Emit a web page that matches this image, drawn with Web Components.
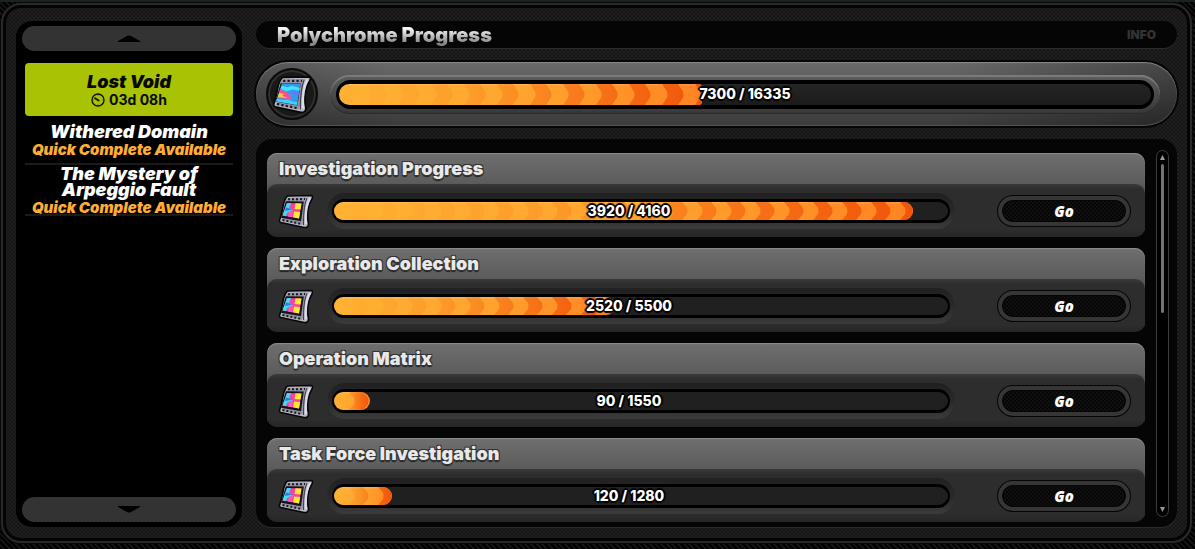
<!DOCTYPE html>
<html lang="en">
<head>
<meta charset="utf-8">
<title>Polychrome Progress</title>
<style>
*{box-sizing:border-box}
html{height:100%}
body{margin:0;min-height:100vh;padding:3px 3px 6px 1px;display:flex;
  background:linear-gradient(#1a2225 0 2px,transparent 2px),repeating-linear-gradient(45deg,#000 0 2px,#141414 2px 4px);
  font-family:Inter,"Liberation Sans",sans-serif;color:#fff}
</style>
</head>
<body>
<game-frame>
  <side-nav slot="side">
    <nav-entry active name="Lost Void" time="03d 08h"></nav-entry>
    <nav-entry name="Withered Domain" note="Quick Complete Available"></nav-entry>
    <nav-entry name="The Mystery of Arpeggio Fault" note="Quick Complete Available"></nav-entry>
  </side-nav>
  <page-title>Polychrome Progress</page-title>
  <total-progress value="7300" max="16335"></total-progress>
  <progress-list>
    <progress-card name="Investigation Progress" value="3920" max="4160"></progress-card>
    <progress-card name="Exploration Collection" value="2520" max="5500"></progress-card>
    <progress-card name="Operation Matrix" value="90" max="1550"></progress-card>
    <progress-card name="Task Force Investigation" value="120" max="1280"></progress-card>
  </progress-list>
</game-frame>
<script>
const base = '*{box-sizing:border-box}button{font:inherit;color:inherit;border:0;padding:0;margin:0;cursor:pointer;background:none}';
class Base extends HTMLElement {
  connectedCallback() {
    if (this.shadowRoot) return;
    this.attachShadow({mode: 'open'}).innerHTML = `<style>${base}${this.css()}</style>${this.html()}`;
  }
  a(n) { return this.getAttribute(n) || ''; }
}

customElements.define('game-frame', class extends Base {
  css() { return `
    :host{flex:1;min-width:0;display:grid;grid-template-columns:226px minmax(0,1fr);gap:14px;
      padding:16px 13px 14px;border:2px solid #292929;border-radius:20px;
      box-shadow:inset 0 0 0 3px #040404,0 0 0 1px #080808;
      background:repeating-conic-gradient(#202020 0 25%,#151515 0 50%) 0 0/4px 4px}
    main{display:flex;flex-direction:column;min-width:0}`; }
  html() { return '<slot name="side"></slot><main><slot></slot></main>'; }
});

customElements.define('side-nav', class extends Base {
  css() { return `
    :host{display:flex;flex-direction:column;background:#000;border-radius:16px;padding:5px 6px}
    .pg{height:25px;border-radius:13px;background:#333;display:flex;align-items:center;justify-content:center}
    nav{flex:1;padding:12px 3px 0}
    svg{display:block}`; }
  html() { return `
    <button class="pg" aria-label="Scroll up"><svg width="22" height="7" viewBox="0 0 22 7"><path d="M0 6 9 1Q11 0 13 1L22 6V7H0Z" fill="#000"/></svg></button>
    <nav><slot></slot></nav>
    <button class="pg" aria-label="Scroll down"><svg width="22" height="7" viewBox="0 0 22 7"><path d="M0 1 9 6Q11 7 13 6L22 1V0H0Z" fill="#000"/></svg></button>`; }
});

customElements.define('nav-entry', class extends Base {
  css() { return `
    :host{display:block;margin-bottom:1px}
    :host([active]){margin-bottom:8px}
    button{position:relative;width:100%;min-height:41px;display:flex;flex-direction:column;align-items:center;gap:2px;
      font-size:18px;line-height:16px;font-weight:900;font-style:italic}
    button::after{content:"";position:absolute;left:0;right:0;bottom:0;height:2px;background:#1a1a1a}
    .n{max-width:180px;text-align:center}
    .s{position:relative;z-index:1;color:#ffae35;font-size:15px;font-weight:900;white-space:nowrap}
    :host([active]) button{height:53px;padding-top:2px;background:#a9c203;color:#080a00;border-radius:4px;justify-content:center}
    :host([active]) button::after{content:none}
    .t{display:flex;align-items:center;gap:4px;font-size:14px;font-style:normal;font-weight:700}`; }
  html() { return `<button><span class="n">${this.a('name')}</span>${
    this.a('time') ? `<span class="t"><svg width="14" height="14" viewBox="0 0 14 14" fill="none" stroke="#101400"><circle cx="7" cy="7" r="6" stroke-width="1.4"/><path d="M4 5.2 7.6 7.6" stroke-width="1.8" stroke-linecap="round"/><path d="M7 1.5v1M12.5 7h-1M7 12.5v-1M1.5 7h1" stroke-width=".8"/></svg>${this.a('time')}</span>` : ''}${
    this.a('note') ? `<span class="s">${this.a('note')}</span>` : ''}</button>`; }
});

customElements.define('page-title', class extends Base {
  css() { return `
    :host{display:flex;align-items:center;justify-content:space-between;height:27px;padding:0 21px;border-radius:14px;
      background:#050505;box-shadow:0 1px 0 #2b2b2b;margin-bottom:14px}
    h1{margin:0;font-size:20px;line-height:24px;font-weight:900;color:transparent;
      background:linear-gradient(#f4f4f4 25%,#858585 85%);-webkit-background-clip:text;background-clip:text}
    button{font-size:12px;font-weight:900;color:#333}`; }
  html() { return '<h1><slot></slot></h1><button>INFO</button>'; }
});

customElements.define('film-icon', class extends Base {
  css() { return ':host{display:block}svg{display:block;width:100%;height:100%;overflow:visible}'; }
  html() {
    const small = `<path d="M9 9 23.5 9.5 21 24.5 4.5 21.5Z" fill="#ff3fa0"/>
      <path d="M9 9 13 9.1 11 14 15 16 9 19 8 22.2 4.5 21.5Z" fill="#35dff5"/>
      <path d="M17.5 9.3 23.5 9.5 22.6 15.5 16.5 15Z M16 17.5 22.2 18 21 24.5 15 23.3Z" fill="#ffe92e"/>
      <path d="M8 13.5 15 15.5 7 17Z" fill="#3079e8"/><path d="M11 18 15 17 14 23.2 10 22.5Z" fill="#ff58b8"/>`;
    const big = `<path d="M9 7.500 25.500 8 22.600 27 3.600 23.500Z" fill="#2c9df5"/>
      <path d="M8.600 9.500 14 11 18 9.500 25 11.500 24.600 14 19 13 13 14.500 7.800 12.500Z" fill="#47e2f7"/>
      <path d="M7.400 13 14 15.500 12 16.500 20 18.500 15 19.500 19 22.500 11 21 5 20.500Z" fill="#ff4f8d"/>
      <path d="M6.600 16 11 17 9 18.500 14 20.500 5.200 20Z" fill="#ffc93a"/>
      <path d="M16 14.500 24.300 16 24 18 20 17.500Z" fill="#7d6df0"/>
      <path d="M4.500 21.500 10 22.500 14 22 19 24 23 24 22.600 27 3.600 23.500Z" fill="#3fd2ff"/>`;
    return `<svg viewBox="0 0 36 34" aria-hidden="true">
      <path d="M8.500 3Q9 2 10.500 2L33 1.500Q35.500 2 34 5C31 10 30 14 29.600 19 29.400 23 29.600 26 30.500 29.500Q31 32 28.500 33.500L26 33.500 3 28.500Q1 28 1.600 26C3 22 4 18 4.700 14 5.500 9 7 5 8.500 3Z" fill="#b9b9c9" stroke="#070707" stroke-width="1.600"/>
      <path d="M9 4 28 3.600 25 28.500 23.500 31 3.500 26.800C6 18 5.500 11 9 4Z" fill="#9595a5"/>
      <path d="M32 4C28 11 27.500 22 28 30" fill="none" stroke="#dedeea" stroke-width="2"/>
      <path d="M29 4C25.800 12 25.500 21 25.500 31" fill="none" stroke="#3a3a44" stroke-width="1"/>
      <path d="M7.800 7.300 25.800 7.500 23 27.300 3 23.700Z" fill="#14141a"/>
      <path d="M10 5.200 27 5.100" stroke="#18181d" stroke-width="2" stroke-dasharray="2 2" fill="none"/>
      <path d="M4.500 26 23 29.800" stroke="#18181d" stroke-width="2" stroke-dasharray="2 2" fill="none"/>
      ${this.hasAttribute('rainbow') ? big : small}</svg>`;
  }
});

customElements.define('chevron-bar', class extends Base {
  css() { return `
    :host{position:relative;display:flex;align-items:center;justify-content:center;height:24px;border-radius:14px;
      border:solid #000;border-width:3px 2px;background:#202020}
    :host([large]){height:29px;border-width:4px 3px;border-radius:15px;background:linear-gradient(#252525,#1b1b1b)}
    .fill{position:absolute;inset:0 auto 0 0;border-radius:12px;overflow:hidden;
      background:linear-gradient(#fff2 0 1px,transparent 2px),linear-gradient(90deg,#ffb233,#ffa32e 55%,#ff8422)}
    :host([large]) .fill{border-radius:14px 5px 5px 14px}
    svg{display:block;width:100%;height:100%;
      -webkit-mask-image:linear-gradient(90deg,#0000,#0002 35%,#0007 65%,#000);mask-image:linear-gradient(90deg,#0000,#0002 35%,#0007 65%,#000)}
    span{position:relative;margin-right:24px;font-size:14px;line-height:16px;font-weight:800;white-space:nowrap;
      text-shadow:-1px -1px 0 #000,1px -1px 0 #000,-1px 1px 0 #000,1px 1px 0 #000,0 2px 1px #000,-2px 0 1px #000,2px 0 1px #000,0 -2px 1px #000}
    :host([large]) span{margin-right:0}`; }
  html() {
    const v = +this.a('value'), m = +this.a('max'), big = this.hasAttribute('large');
    const p = big ? 33 : 29, off = big ? 15 : 6, h = big ? 21 : 18, w = big ? 16 : 14, c = h / 2;
    const edge = p - 6, back = edge - w;
    return `<div class="fill" style="width:${v / m * 100}%"><svg aria-hidden="true"><defs>
      <pattern id="c" width="${p}" height="${h}" patternUnits="userSpaceOnUse" x="${off}">
      <path d="M${back} 0H${edge}L${p - 1} ${c - 3}Q${p} ${c} ${p - 1} ${c + 3}L${edge} ${h}H${back}L${back + 5} ${c + 3}Q${back + 6} ${c} ${back + 5} ${c - 3}Z" fill="#f0560b"/></pattern></defs>
      <rect width="100%" height="100%" fill="url(#c)"/></svg></div>
      <span role="progressbar" aria-valuenow="${v}" aria-valuemax="${m}">${v} / ${m}</span>`;
  }
});

customElements.define('total-progress', class extends Base {
  css() { return `
    :host{display:flex;align-items:center;gap:12px;height:64px;margin-bottom:13px;padding:0 17px 0 10px;border-radius:32px;
      background:linear-gradient(90deg,#0003,transparent 15% 75%,#0005),linear-gradient(#6b6b6b,#3a3a3a);
      box-shadow:inset 0 1px 1px #8a8a8a,inset 0 -1px 1px #555,0 0 0 2px #050505}
    .disc{flex:none;width:52px;height:52px;border-radius:50%;display:grid;place-items:center;background:#191919;border:2px solid #0b0b0b;box-shadow:inset 0 0 0 2px #303030}
    film-icon{width:40px;height:38px}
    .ring{flex:1;min-width:0;padding:5px 6px;border-radius:20px;background:linear-gradient(#5c5c5c,#383838);box-shadow:inset 0 2px 1px #7c7c7c,inset 0 -1px 1px #2a2a2a}`; }
  html() { return `<div class="disc"><film-icon rainbow></film-icon></div>
    <div class="ring"><chevron-bar large value="${this.a('value')}" max="${this.a('max')}"></chevron-bar></div>`; }
});

customElements.define('progress-list', class extends Base {
  css() { return `
    :host{flex:1;display:flex;gap:11px;padding:11px 8px 0 11px;border-radius:16px;background:#050505;box-shadow:0 1px 0 #2b2b2b}
    .cards{flex:1;min-width:0;display:flex;flex-direction:column;gap:11px;padding:3px 0 4px}
    .bar{width:13px;margin-bottom:10px;border:1px solid #3d3d3d;border-radius:7px;background:#000;display:flex;flex-direction:column;align-items:center;padding:4px 0}
    .rail{flex:1;width:3px;margin:4px 0}
    .thumb{height:44%;border-radius:2px;background:#737373}
    svg{display:block}`; }
  html() { return `<div class="cards"><slot></slot></div>
    <div class="bar"><svg width="5" height="5" viewBox="0 0 5 5"><path d="M2.500 0 5 5H0Z" fill="#999"/></svg><div class="rail"><div class="thumb"></div></div><svg width="5" height="5" viewBox="0 0 5 5"><path d="M0 0H5L2.500 5Z" fill="#999"/></svg></div>`; }
});

customElements.define('progress-card', class extends Base {
  css() { return `
    :host{display:flex;flex-direction:column;height:84px;border-radius:10px;overflow:hidden;
      background:linear-gradient(#6f6f6f,#5c5c5c 30px,#484848 40px,#2c2c2c 60px);box-shadow:inset 0 1px 1px #8c8c8c}
    h2{margin:0;padding:0 12px;height:31px;font-size:18px;line-height:32px;font-weight:900;color:#e8e8e8;
      text-shadow:-1px -1px 0 #333,1px -1px 0 #333,-1px 1px 0 #333,1px 1px 0 #333,0 2px 1px #222}
    .row{flex:1;display:grid;grid-template-columns:36px minmax(0,1fr) 134px;align-items:center;
      padding:1px 14px 0 11px;border-radius:10px;background:linear-gradient(#383838 0 1px,#2d2d2d 5px,#2d2d2d 85%,#262626)}
    film-icon{width:36px;height:34px}
    .ring{margin:0 42px 0 13px;padding:6px 5px;border-radius:18px;background:linear-gradient(#202020,#292929 50%,#3b3b3b)}
    .go{height:30px;margin:0 1px;border-radius:15px;padding:0;border:4px solid #363636;
      background:repeating-conic-gradient(#060606 0 25%,#101010 0 50%) 0 0/4px 4px padding-box,#363636;
      box-shadow:0 0 0 1px #050505,inset 0 0 0 1px #050505;
      font:italic 800 15px/20px "Open Sans","Noto Sans",sans-serif}`; }
  html() { return `<h2>${this.a('name')}</h2>
    <div class="row"><film-icon></film-icon>
    <div class="ring"><chevron-bar value="${this.a('value')}" max="${this.a('max')}"></chevron-bar></div>
    <button class="go">Go</button></div>`; }
});
</script>
</body>
</html>
